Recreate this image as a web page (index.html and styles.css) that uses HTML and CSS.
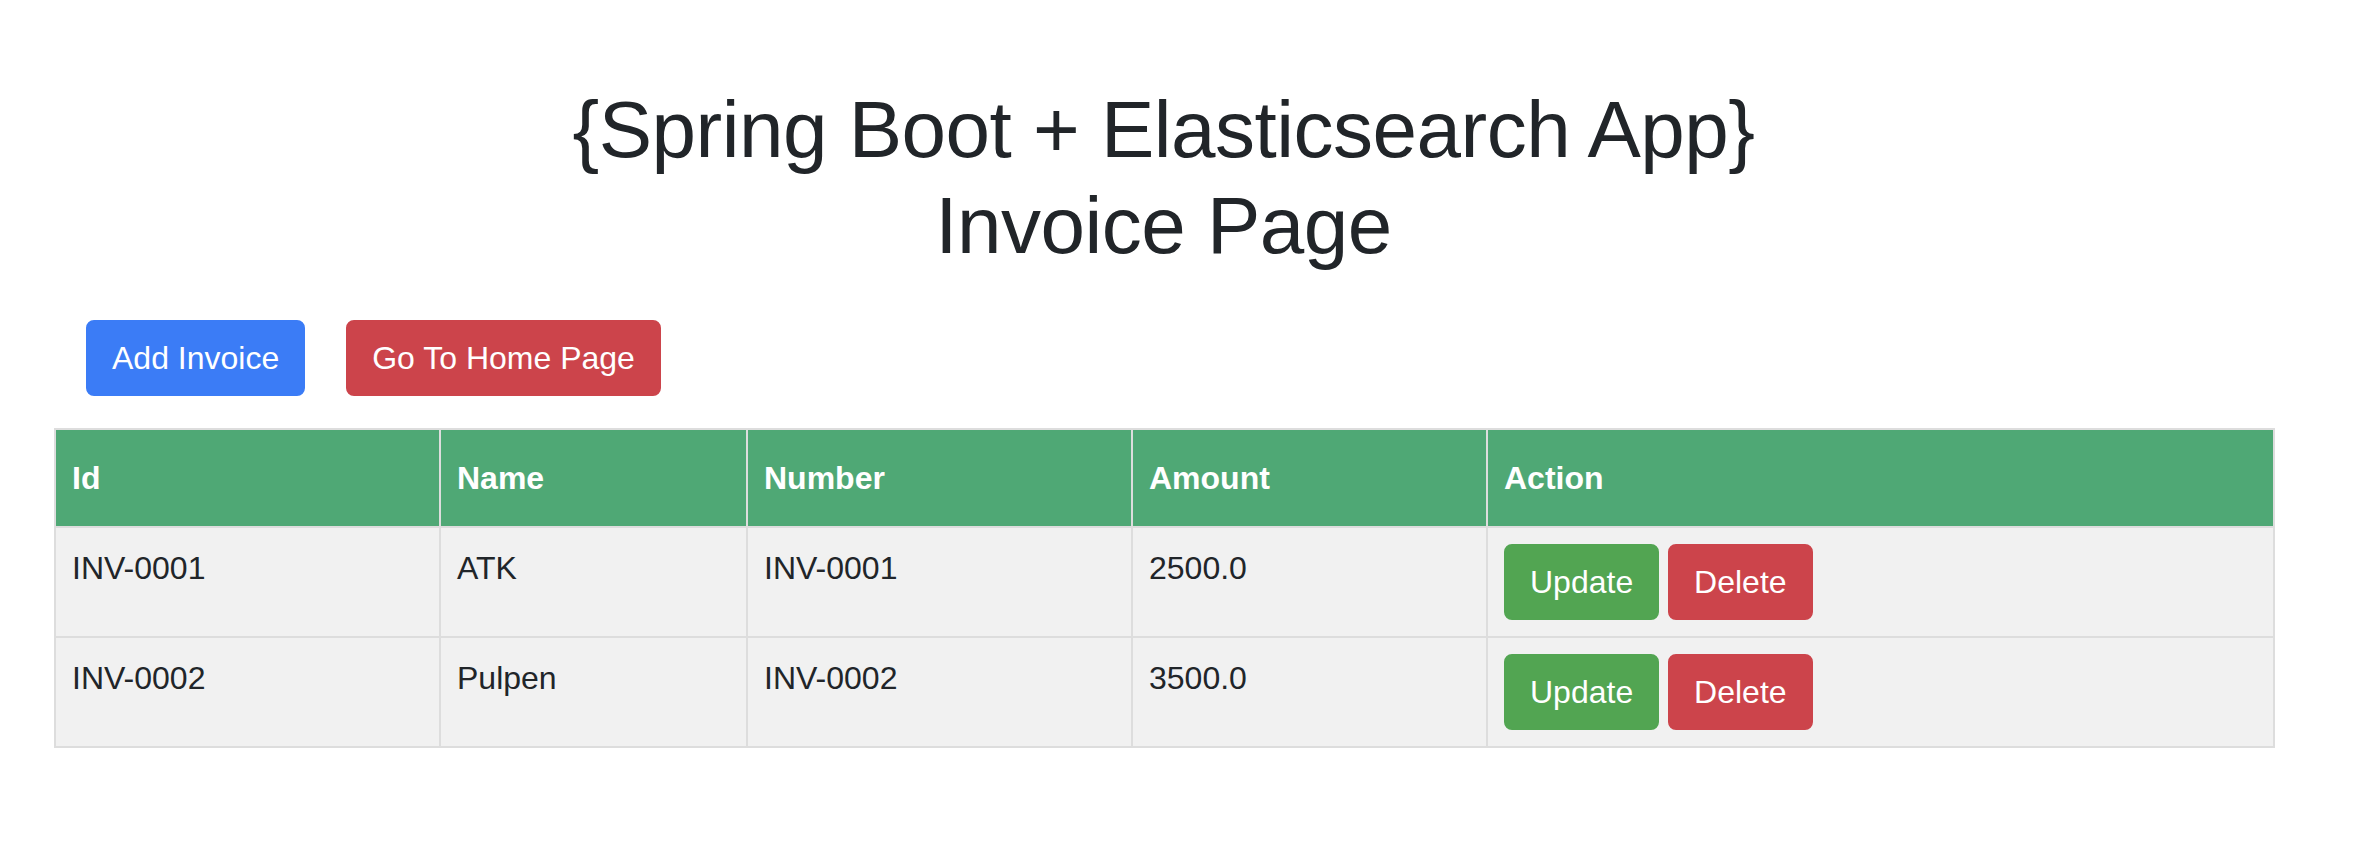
FILE: index.html
```html
<!DOCTYPE html>
<html lang="en">
<head>
<meta charset="utf-8">
<title>Invoice Page</title>
<link rel="stylesheet" href="styles.css">
</head>
<body>
<div class="container">
  <h1 class="title">{Spring Boot + Elasticsearch App}<br>Invoice Page</h1>
  <div class="actions">
    <a class="btn btn-primary" href="#">Add Invoice</a>
    <a class="btn btn-danger" href="#">Go To Home Page</a>
  </div>
  <table class="invoices">
    <colgroup>
      <col class="c-id"><col class="c-name"><col class="c-number"><col class="c-amount"><col class="c-action">
    </colgroup>
    <thead>
      <tr><th>Id</th><th>Name</th><th>Number</th><th>Amount</th><th>Action</th></tr>
    </thead>
    <tbody>
      <tr>
        <td>INV-0001</td><td>ATK</td><td>INV-0001</td><td>2500.0</td>
        <td><a class="btn btn-success" href="#">Update</a> <a class="btn btn-danger" href="#">Delete</a></td>
      </tr>
      <tr>
        <td>INV-0002</td><td>Pulpen</td><td>INV-0002</td><td>3500.0</td>
        <td><a class="btn btn-success" href="#">Update</a> <a class="btn btn-danger" href="#">Delete</a></td>
      </tr>
    </tbody>
  </table>
</div>
</body>
</html>
```
FILE: styles.css
```css
* { box-sizing: border-box; }
html, body {
  margin: 0;
  padding: 0;
  background: #ffffff;
}
body {
  font-family: "Liberation Sans", Arial, Helvetica, sans-serif;
  font-size: 32px;
  line-height: 1.5;
  color: #212529;
}
.container {
  margin-left: 54px;
  width: 2219px;
  padding-top: 82px;
}
.title {
  margin: 0 0 46px 0;
  font-size: 80px;
  font-weight: 400;
  line-height: 1.2;
  letter-spacing: -0.5px;
  text-align: center;
  color: #212529;
}
.actions {
  display: flex;
  gap: 41px;
  padding-left: 32px;
  margin-bottom: 32px;
}
.btn {
  display: inline-block;
  font-size: 32px;
  line-height: 48px;
  padding: 12px 24px;
  border: 2px solid transparent;
  border-radius: 8px;
  color: #ffffff;
  text-decoration: none;
  vertical-align: middle;
}
.btn-primary { background: #3b7cf6; border-color: #3b7cf6; }
.btn-danger { background: #cc444b; border-color: #cc444b; }
.btn-success { background: #52a552; border-color: #52a552; }

.invoices {
  width: 2219px;
  table-layout: fixed;
  border-collapse: collapse;
}
.c-id { width: 385px; }
.c-name { width: 307px; }
.c-number { width: 385px; }
.c-amount { width: 355px; }
.c-action { width: 787px; }
.invoices th,
.invoices td {
  border: 2px solid #dddddd;
  padding: 16px;
  text-align: left;
  vertical-align: top;
}
.invoices th {
  padding-top: 24px;
  padding-bottom: 24px;
  background: #4fa875;
  color: #ffffff;
  font-weight: 700;
}
.invoices td {
  background: #f1f1f1;
}
```
